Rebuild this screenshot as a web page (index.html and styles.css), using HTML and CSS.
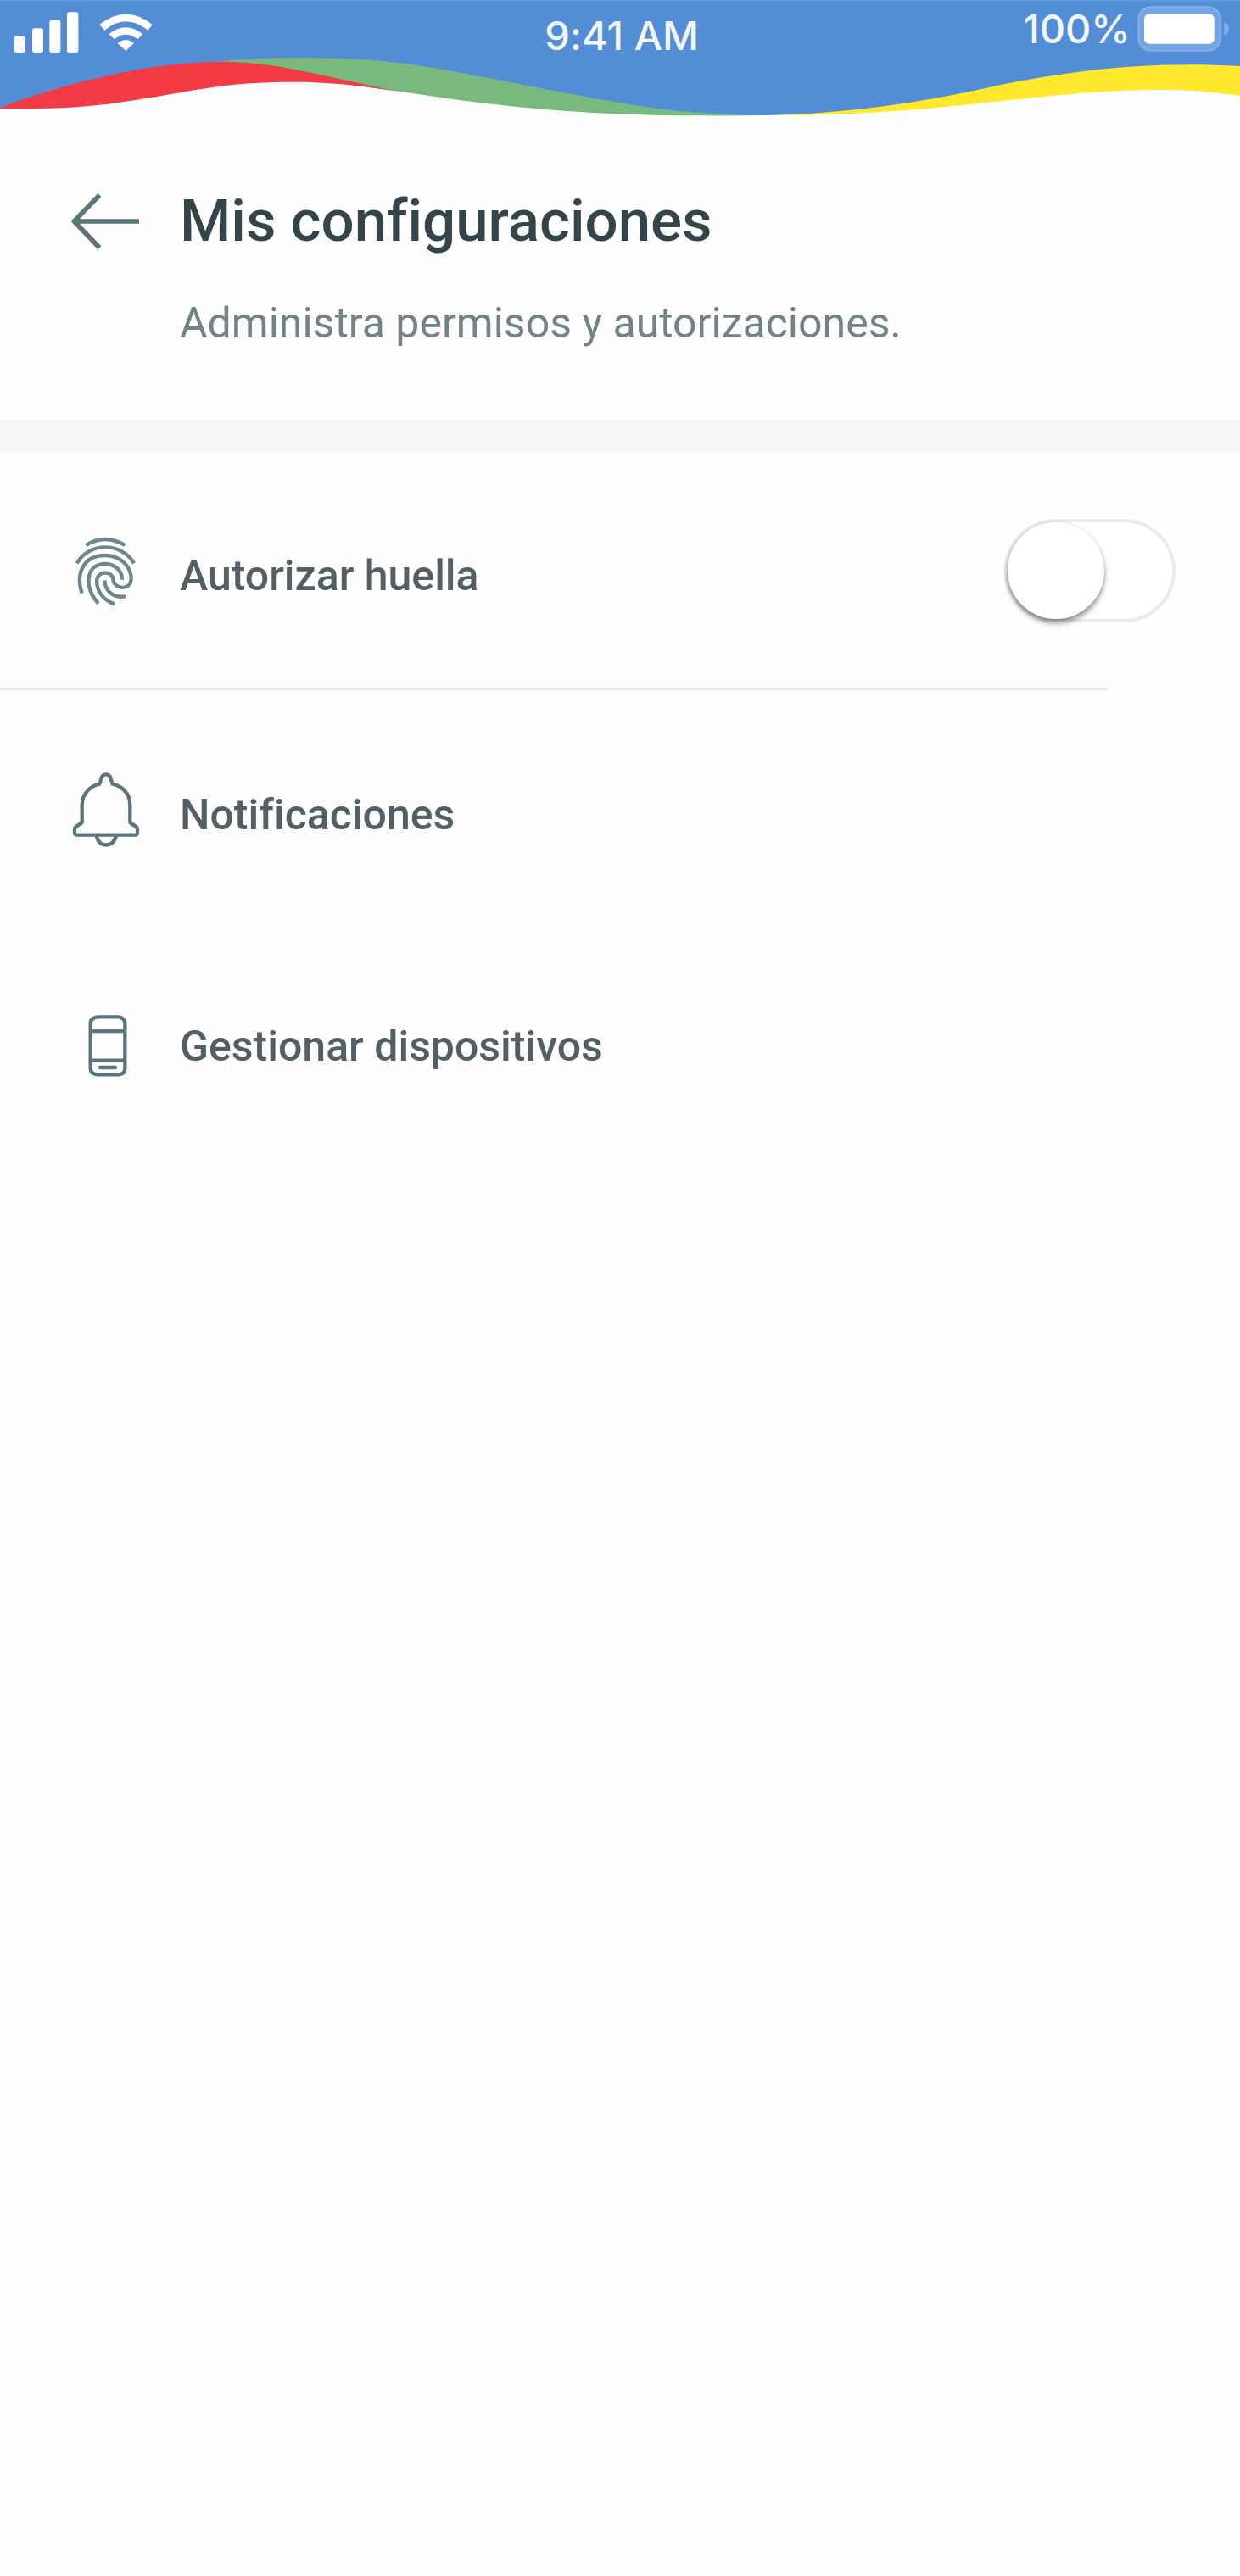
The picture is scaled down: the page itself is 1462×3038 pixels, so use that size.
FILE: index.html
```html
<!DOCTYPE html>
<html lang="es">

<head>
    <meta charset="UTF-8">
    <meta name="viewport" content="width=device-width, initial-scale=1.0">
    <title>Mis configuraciones</title>
    <link rel="stylesheet" href="styles.css">
</head>

<body>

    <header class="top">
        <svg class="waves" viewBox="0 0 1462 137" preserveAspectRatio="none" aria-hidden="true">
            <path fill="#528dd5" d="M0 0H1462V90C1340 80 1250 90 1180 104C1100 122 1010 135 900 136Q800 137 720 132C620 124 500 90 330 84C200 84 100 110 0 127Z" />
            <path fill="#5c98df" d="M0 0H1462V2H0Z" />
            <path fill="#7ab97d" d="M240 74C320 66 400 66 480 75C590 92 700 120 800 131L880 136C740 138 630 132 500 112L400 98Z" />
            <path fill="#f33b45" d="M0 127C70 101 160 76 250 73C320 71 380 90 470 108C400 97 360 95 300 98C220 102 150 128 40 128H0Z" />
            <path fill="#ffe92f" d="M900 136C1010 134 1100 118 1180 100C1270 82 1360 72 1462 78V113C1390 102 1320 106 1250 112C1130 124 1050 136 900 136Z" />
        </svg>

        <div class="status">
            <div class="status-left">
                <svg class="signal" viewBox="48 44 231 144" aria-hidden="true">
                    <rect x="50" y="130" width="40" height="58" rx="8" />
                    <rect x="114" y="102" width="39" height="86" rx="8" />
                    <rect x="175" y="73" width="39" height="115" rx="8" />
                    <rect x="237" y="45" width="40" height="143" rx="8" />
                </svg>
                <svg class="wifi" viewBox="351 48 189 132" aria-hidden="true">
                    <path d="M352 87Q445 14 539 87L523 107Q445 45 370 107Z" />
                    <path d="M385 121Q445 73 505 121L487 139Q445 105 405 139Z" />
                    <path d="M416 153Q445 129 474 153L445 180Z" />
                </svg>
            </div>
            <span class="time">9:41 AM</span>
            <div class="status-right">
                <span>100%</span>
                <svg class="battery" viewBox="1136 24 327 162" aria-hidden="true">
                    <rect x="1140" y="28" width="290" height="154" rx="44" fill="#74a4e1" stroke="#82aee6" stroke-width="7" />
                    <rect x="1160" y="52" width="248" height="106" rx="18" fill="#fff" />
                    <path fill="#82aee6" d="M1443 82Q1460 86 1460 104Q1460 124 1443 128Z" />
                </svg>
            </div>
        </div>
    </header>

    <main>
        <section class="heading">
            <button class="back" type="button" aria-label="Volver">
                <svg class="icon" viewBox="72 63 240 240" aria-hidden="true">
                    <path d="M312 183H84M172 90L82 183L172 277" />
                </svg>
            </button>
            <h1>Mis configuraciones</h1>
            <p>Administra permisos y autorizaciones.</p>
        </section>

        <ul class="options">
            <li class="option option-switch">
                <svg class="icon icon-finger" viewBox="72 100 240 240" aria-hidden="true">
                    <path d="M124 130Q190 88 262 130" />
                    <path d="M92 194C134 118 250 118 294 194" />
                    <path d="M110 300C86 228 116 167 190 166C252 166 284 210 284 248C284 290 224 290 220 250C216 220 166 218 162 256C162 296 190 328 226 338" />
                    <path d="M168 336C116 282 122 197 190 196C230 196 252 222 252 252" />
                    <path d="M190 254C192 294 222 318 264 311" />
                </svg>
                <label for="huella">Autorizar huella</label>
                <input class="switch" type="checkbox" id="huella">
            </li>
            <li class="option">
                <svg class="icon icon-bell" viewBox="72 60 240 270" aria-hidden="true">
                    <path d="M92 284H298Q306 284 306 276V264C306 250 290 252 280 240V180C280 132 246 110 218 104C212 96 216 70 195 70C174 70 178 96 172 104C144 110 110 134 110 180V240C100 252 84 250 84 264V276Q84 284 92 284Z" />
                    <path d="M162 288C168 330 222 330 230 288" />
                </svg>
                <a href="#notificaciones">Notificaciones</a>
            </li>
            <li class="option option-phone">
                <svg class="icon" viewBox="72 60 240 240" aria-hidden="true">
                    <path d="M164 94H240Q262 98 262 118V276Q262 296 240 298H164Q140 296 140 276V118Q140 98 164 94ZM140 144H262M140 248H262" />
                    <path d="M174 273H228" />
                </svg>
                <a href="#dispositivos">Gestionar dispositivos</a>
            </li>
        </ul>
    </main>

</body>

</html>
```
FILE: styles.css
```css
* {
    box-sizing: border-box;
}

body {
    margin: 0;
    min-height: 100vh;
    background-color: #fefefe;
    color: #526065;
    font-family: Roboto, "Liberation Sans", sans-serif;
    font-size: 50px;
    line-height: 60px;
    font-variant-ligatures: none;
}

.top {
    position: relative;
    height: 137px;
}

/* the waves lie behind the status bar */
.waves {
    position: absolute;
    top: 0;
    left: 0;
    width: 100%;
    height: 100%;
}

.status {
    position: relative;
    display: grid;
    grid-template-columns: 1fr auto 1fr;
    align-items: center;
    height: 76px;
    padding: 0 12px 0 16px;
    color: #f2f7ff;
    font-family: Inter, sans-serif;
    font-size: 47px;
    font-weight: 500;
}

.status-left,
.status-right {
    display: flex;
    align-items: center;
}

.status-left {
    gap: 24px;
    fill: #fff;
}

.status-right {
    justify-content: flex-end;
    gap: 8px;
    padding-bottom: 8px;
}

.time {
    padding-top: 8px;
}

.signal {
    width: 77px;
    height: 48px;
}

.wifi {
    width: 63px;
    height: 44px;
}

.battery {
    width: 109px;
    height: 54px;
}

.heading {
    display: grid;
    grid-template-columns: 80px 1fr;
    column-gap: 48px;
    row-gap: 50px;
    align-items: center;
    padding: 84px 76px 84px 84px;
    border-bottom: 37px solid #f4f6f8;
}

.heading h1 {
    margin: 0;
    color: #33454a;
    font-size: 69px;
    font-weight: 500;
    line-height: 80px;
}

.heading p {
    grid-column: 2;
    margin: 0;
    color: #718388;
}

.back {
    display: flex;
    padding: 0;
    border: none;
    background: none;
    cursor: pointer;
}

.icon {
    width: 80px;
    height: 80px;
    overflow: visible;
    fill: none;
    stroke: #5c747b;
    stroke-width: 13px;
    stroke-linecap: round;
    stroke-linejoin: round;
}

.back .icon {
    stroke-width: 17px;
    stroke-linecap: butt;
}

.icon-finger {
    stroke: #6f868d;
    stroke-linecap: butt;
}

.icon-bell {
    height: 90px;
}

.options {
    margin: 0;
    padding: 0;
    list-style: none;
}

.option {
    display: grid;
    grid-template-columns: 80px 1fr auto;
    column-gap: 48px;
    align-items: center;
    height: 282px;
    padding: 0 76px 0 84px;
}

.option label,
.option a {
    padding-top: 12px;
    color: inherit;
    font-weight: 500;
    text-decoration: none;
}

/* divider stops short of the right edge */
.option-switch {
    background: linear-gradient(#e6e9ea, #e6e9ea) left bottom / calc(100% - 156px) 3px no-repeat;
}

.option-phone {
    height: 264px;
}

.switch {
    appearance: none;
    display: flex;
    width: 202px;
    height: 122px;
    margin: 0;
    border: 4px solid #ebebeb;
    border-radius: 61px;
    background-color: #fff;
    cursor: pointer;
}

.switch::before {
    content: "";
    width: 114px;
    height: 114px;
    border-radius: 50%;
    background-color: #fff;
    box-shadow: 0 5px 6px rgba(0, 0, 0, 0.4), 0 0 4px rgba(0, 0, 0, 0.1);
}

.switch:checked {
    justify-content: flex-end;
    background-color: #7ab97d;
}
```
